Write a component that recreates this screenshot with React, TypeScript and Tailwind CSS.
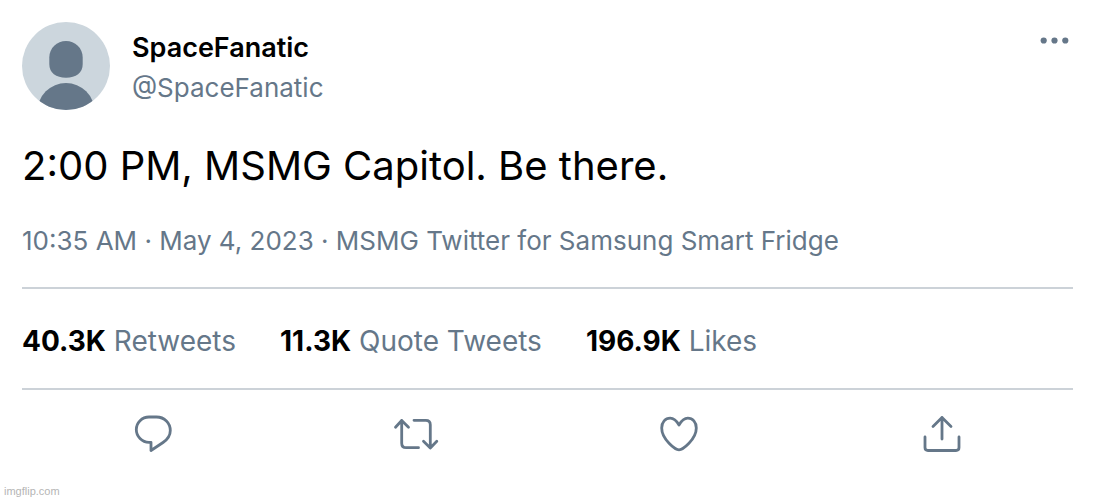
import type { ReactNode } from 'react'

const stats = [
  { value: '40.3K', label: 'Retweets' },
  { value: '11.3K', label: 'Quote Tweets' },
  { value: '196.9K', label: 'Likes' },
]

function Avatar() {
  return (
    <svg viewBox="0 0 88 88" className="size-22 shrink-0 rounded-full bg-[#ccd6dd]" aria-hidden="true">
      <path
        d="M44 19C53 19 60.7 26 60.7 35.5V42C60.7 51 54 55.7 44 55.7S27.3 51 27.3 42V35.5C27.3 26 35 19 44 19Z"
        fill="#657789"
      />
      <circle cx="44" cy="89.5" r="28.5" fill="#657789" />
    </svg>
  )
}

function Action({ label, children }: { label: string; children: ReactNode }) {
  return (
    <button type="button" aria-label={label} className="flex justify-center">
      <svg
        viewBox="0 0 48 48"
        className="size-12"
        fill="none"
        stroke="currentColor"
        strokeWidth="2.8"
        strokeLinecap="round"
        strokeLinejoin="round"
      >
        {children}
      </svg>
    </button>
  )
}

export default function App() {
  return (
    <div className="bg-white font-['Inter',sans-serif] text-[#657789]">
      <article className="px-[22px] pt-[22px]">
        <header className="flex items-start justify-between">
          <div className="flex gap-[22px]">
            <Avatar />
            <div className="pt-[6px]">
              <p className="text-[27px] leading-10 font-semibold text-black">SpaceFanatic</p>
              <a href="#profile" className="block text-[26px] leading-10">
                @SpaceFanatic
              </a>
            </div>
          </div>
          <button type="button" aria-label="More" className="pt-2">
            <svg viewBox="0 0 38 22" className="h-[22px] w-[38px]" fill="currentColor">
              <circle cx="8.7" cy="10.5" r="3.1" />
              <circle cx="19.5" cy="10.5" r="3.1" />
              <circle cx="30.3" cy="10.5" r="3.1" />
            </svg>
          </button>
        </header>

        <p className="mt-7 text-[40px] leading-14 text-black">2:00 PM, MSMG Capitol. Be there.</p>

        <p className="mt-[27px] border-b-2 border-[#ccd2d8] pb-[26px] text-[26px] leading-10">
          10:35 AM · May 4, 2023 · MSMG Twitter for Samsung Smart Fridge
        </p>

        <div className="flex gap-11 border-b-2 border-[#ccd2d8] pt-8 pb-[27px] text-[28px] leading-10">
          {stats.map((stat) => (
            <a key={stat.label} href="#stats">
              <strong className="font-bold text-black">{stat.value}</strong> {stat.label}
            </a>
          ))}
        </div>

        <div className="grid grid-cols-4 pt-5">
          <Action label="Reply">
            <path d="M20 7H27.5C35.5 7 41.3 13 41.3 20.5C41.3 25 38.5 29.5 34 32.5L22 40.5V32.3H20C13 32.3 7.3 26.5 7.3 19.6C7.3 12.7 13 7 20 7Z" />
          </Action>
          <Action label="Retweet">
            <path d="M3.5 17.3L9.7 10.5L16.5 17.3M9.7 10.5V33.2Q9.7 37.7 14.2 37.7H26.5" />
            <path d="M22 10.3H33.8Q38.3 10.3 38.3 14.8V38M31.5 31.3L38.3 38L44.8 31.3" />
          </Action>
          <Action label="Like">
            <path d="M24 15C21.8 11.2 19 8.2 15.2 8.2C10.3 8.2 6.7 12.2 6.7 18C6.7 29.5 20.5 39.8 24 39.8S41.3 29.5 41.3 18C41.3 12.2 37.7 8.2 32.8 8.2C29 8.2 26.2 11.2 24 15Z" />
          </Action>
          <Action label="Share">
            <path d="M15 16.5L24 7.5L33 16.5M24 7.5V29" />
            <path d="M7 27V37.5Q7 40.5 10 40.5H38Q41 40.5 41 37.5V27" />
          </Action>
        </div>
      </article>

      <footer className="mt-[25px] px-1 font-['Liberation_Sans',sans-serif] text-[11px] leading-4 text-[#b5b5b5]">
        imgflip.com
      </footer>
    </div>
  )
}
